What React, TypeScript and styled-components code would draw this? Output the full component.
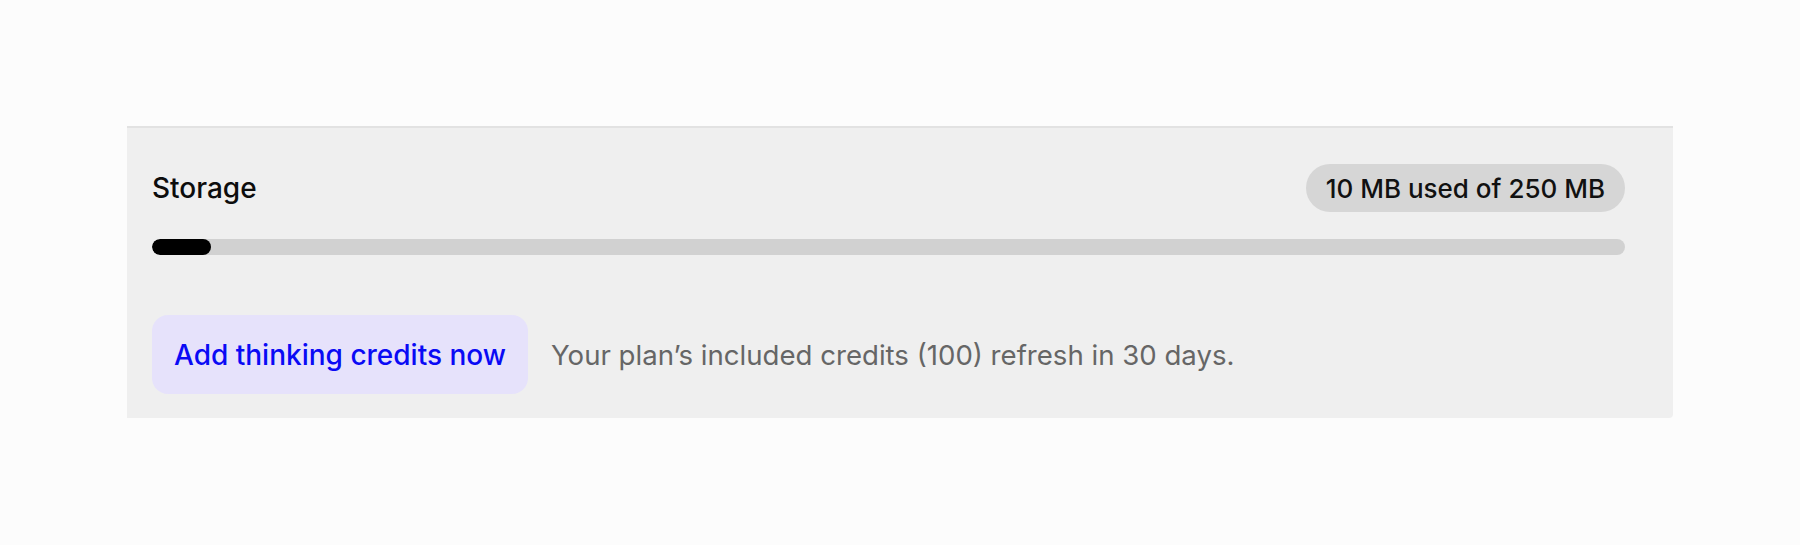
import styled, { createGlobalStyle } from "styled-components";

const GlobalStyle = createGlobalStyle`
  body {
    margin: 0;
    background: #fcfcfc;
    font-family: Inter, "Noto Sans", sans-serif;
  }
`;

const Panel = styled.section`
  margin: 126px 127px 0;
  border-top: 2px solid #e2e2e2;
  border-bottom-right-radius: 4px;
  background: #efefef;
  padding: 36px 48px 24px 25px;
  display: flex;
  flex-direction: column;
`;

const Header = styled.div`
  display: flex;
  align-items: center;
  justify-content: space-between;
  height: 48px;
`;

const Title = styled.h2`
  margin: 0;
  font-size: 28px;
  font-weight: 500;
  color: #0d0d0d;
`;

const Badge = styled.span`
  height: 48px;
  display: flex;
  align-items: center;
  padding: 0 20px;
  border-radius: 24px;
  background: #d6d6d6;
  font-size: 26px;
  font-weight: 500;
  color: #111;
`;

const Track = styled.div`
  margin-top: 27px;
  height: 16px;
  border-radius: 8px;
  background: #d1d1d1;
  overflow: hidden;
`;

const Fill = styled.div`
  height: 100%;
  border-radius: 8px;
  background: #000;
`;

const Footer = styled.div`
  margin-top: 60px;
  display: flex;
  align-items: center;
  gap: 23px;
`;

const CreditsButton = styled.button`
  height: 79px;
  padding: 0 22px;
  border: none;
  border-radius: 16px;
  background: #e6e2fb;
  color: #0a0af5;
  font-family: inherit;
  font-size: 28px;
  font-weight: 500;
  cursor: pointer;
`;

const Note = styled.span`
  font-size: 27.6px;
  color: #666;
`;

export default function App() {
  const used = 10;
  const total = 250;
  return (
    <>
      <GlobalStyle />
      <Panel>
        <Header>
          <Title>Storage</Title>
          <Badge>
            {used} MB used of {total} MB
          </Badge>
        </Header>
        <Track>
          <Fill style={{ width: `${(used / total) * 100}%` }} />
        </Track>
        <Footer>
          <CreditsButton>Add thinking credits now</CreditsButton>
          <Note>Your plan’s included credits (100) refresh in 30 days.</Note>
        </Footer>
      </Panel>
    </>
  );
}
